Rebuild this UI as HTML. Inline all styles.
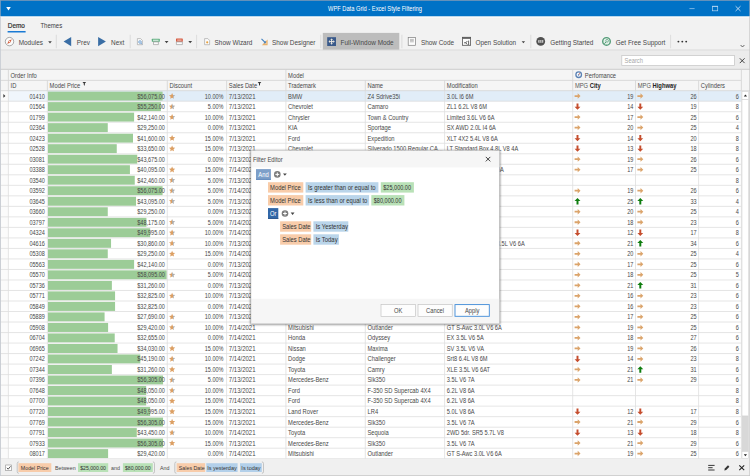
<!DOCTYPE html>
<html lang="en"><head><meta charset="utf-8"><title>WPF Data Grid - Excel Style Filtering</title>
<style>html,body{margin:0;padding:0;background:#f1f1f1;overflow:hidden}body{width:750px;height:476px;position:relative}svg{position:absolute;left:0;top:0;display:block}svg text{font-family:"Liberation Sans",sans-serif;white-space:pre}</style></head><body>
<svg width="750" height="476" viewBox="0 0 750 476">
<defs>
<filter id="sh" x="-10%" y="-10%" width="120%" height="125%"><feGaussianBlur stdDeviation="1.3"/></filter>
<clipPath id="cName"><rect x="365" y="88" width="78.5" height="372"/></clipPath>
<clipPath id="cMod"><rect x="445" y="88" width="126.5" height="372"/></clipPath>
<path id="star" d="M0.000,-1.000 L0.276,-0.380 L0.951,-0.309 L0.447,0.145 L0.588,0.809 L0.000,0.470 L-0.588,0.809 L-0.447,0.145 L-0.951,-0.309 L-0.276,-0.380Z"/>
<linearGradient id="g5" gradientUnits="userSpaceOnUse" x1="-0.95" x2="0.95" y1="0" y2="0"><stop offset="0.47" stop-color="#dc9f63"/><stop offset="0.47" stop-color="#adadad"/></linearGradient>
<linearGradient id="g10" gradientUnits="userSpaceOnUse" x1="-0.95" x2="0.95" y1="0" y2="0"><stop offset="0.57" stop-color="#dc9f63"/><stop offset="0.57" stop-color="#adadad"/></linearGradient>
<path id="arR" d="M-2.9,-0.9 H0.2 V-2.7 L3,0 L0.2,2.7 V0.9 H-2.9Z"/>
</defs>
<rect x="0.00" y="0.00" width="750.00" height="476.00" fill="#f2f2f2" />
<rect x="0.00" y="0.00" width="750.00" height="16.50" fill="#0072c6" />
<rect x="0.00" y="0.00" width="750.00" height="0.90" fill="#6f95b9" />
<rect x="0.00" y="0.00" width="0.80" height="16.50" fill="#7f9fbf" />
<rect x="749.20" y="0.00" width="0.80" height="16.50" fill="#7f9fbf" />
<rect x="0.00" y="16.50" width="750.00" height="1.20" fill="#fbfbfb" />
<text transform="translate(375.00,11.10) scale(0.842,1)" font-size="6.8" fill="#ffffff" text-anchor="middle" >WPF Data Grid - Excel Style Filtering</text>
<path d="M6.2,7.1 h4.6 l-2.3,3.3z" fill="#fff"/>
<line x1="689.40" y1="8.60" x2="694.60" y2="8.60" stroke="#a9cff0" stroke-width="0.7" />
<rect x="712.5" y="6.2" width="5.2" height="4.6" fill="none" stroke="#b4d5f2" stroke-width="0.7"/><path d="M712.2,6.5 h5.8" stroke="#b4d5f2" stroke-width="0.8"/>
<path d="M735.6,6.2 l4.9,4.8 M740.5,6.2 l-4.9,4.8" stroke="#e2eefa" stroke-width="0.8" fill="none"/>
<text transform="translate(7.80,27.70) scale(0.88,1)" font-size="7.3" fill="#2b2b2b" stroke="#2b2b2b" stroke-width="0.18">Demo</text>
<rect x="7.60" y="31.00" width="18.00" height="1.50" fill="#1a7ad4" />
<text transform="translate(40.40,27.70) scale(0.83,1)" font-size="7.3" fill="#3c3c3c" >Themes</text>
<circle cx="9.5" cy="41.6" r="4.2" fill="#fbfbfb" stroke="#7c7c7c" stroke-width="0.65"/>
<path d="M11.8,39.3 L8.7,40.8 L7.2,43.9 L10.3,42.4Z" fill="#d4603f"/><circle cx="9.5" cy="41.6" r="0.6" fill="#fff"/>
<text transform="translate(18.70,44.70) scale(0.88,1)" font-size="7.3" fill="#484848" >Modules</text>
<path d="M48.2,41.2 h3.6 l-1.8,2.2z" fill="#444"/>
<line x1="56.30" y1="34.80" x2="56.30" y2="48.20" stroke="#d6d6d6" stroke-width="0.8" />
<path d="M71.2,37 V46.2 L63.6,41.6Z" fill="#3a6ea5"/>
<text transform="translate(76.80,44.70) scale(0.88,1)" font-size="7.3" fill="#484848" >Prev</text>
<path d="M98.1,37 V46.2 L105.9,41.6Z" fill="#3a6ea5"/>
<text transform="translate(111.00,44.70) scale(0.88,1)" font-size="7.3" fill="#484848" >Next</text>
<line x1="130.20" y1="34.80" x2="130.20" y2="48.20" stroke="#d6d6d6" stroke-width="0.8" />
<path d="M137.4,38.6 h3.2 l1.8,1.8 v4.3 h-5z" fill="#fbfbfb" stroke="#9a9a9a" stroke-width="0.6"/>
<circle cx="140" cy="42" r="1.35" fill="#dbe9f6" stroke="#4a86c5" stroke-width="0.6"/><path d="M140.9,43 l1.2,1.3" stroke="#4a86c5" stroke-width="0.7"/>
<rect x="151.8" y="38.8" width="8" height="3" rx="0.5" fill="#5fae80"/><rect x="153" y="39.7" width="5.6" height="1.1" fill="#e3f2e9"/>
<path d="M153.5,41.9 h4.9 v2.7 h-4.9z" fill="#fcfcfc" stroke="#8f8f8f" stroke-width="0.6"/>
<path d="M164.7,41 h3.8 l-1.9,2.3z" fill="#444"/>
<rect x="176" y="38.5" width="6.8" height="3.3" rx="0.4" fill="#d65a41"/><rect x="177.2" y="39.6" width="4.4" height="1.0" fill="#f3cdc4"/>
<path d="M176.4,41.9 h6 v2.7 h-6z" fill="#fcfcfc" stroke="#8f8f8f" stroke-width="0.6"/>
<path d="M188.3,41 h3.8 l-1.9,2.3z" fill="#444"/>
<line x1="196.60" y1="34.80" x2="196.60" y2="48.20" stroke="#d6d6d6" stroke-width="0.8" />
<path d="M204.6,38.6 h3.2 l1.8,1.8 v4.3 h-5z" fill="#fbfbfb" stroke="#9a9a9a" stroke-width="0.6"/><circle cx="207.2" cy="42.3" r="1.1" fill="#e9a23f"/>
<text transform="translate(214.60,44.70) scale(0.88,1)" font-size="7.3" fill="#484848" >Show Wizard</text>
<path d="M267.6,39.4 v5.8 h-5.8z" fill="#eab26d"/><path d="M266.5,42.2 v1.9 h-1.9z" fill="#f6dcba"/>
<path d="M261.5,38.9 l3.3,3.3" stroke="#3f7fbf" stroke-width="1.1"/><path d="M265.8,40.8 v2.4 h-2.4z" fill="#3f7fbf"/>
<text transform="translate(272.00,44.70) scale(0.88,1)" font-size="7.3" fill="#484848" >Show Designer</text>
<line x1="320.80" y1="34.80" x2="320.80" y2="48.20" stroke="#d6d6d6" stroke-width="0.8" />
<rect x="322.80" y="32.90" width="76.50" height="17.30" fill="#bdbdbd" />
<rect x="327.2" y="37.2" width="8.8" height="8.8" fill="#39598a"/>
<path d="M331.6,38.6 l1.5,1.2 h-3z M331.6,44.6 l1.5,-1.2 h-3z M328.6,41.6 l1.2,-1.5 v3z M334.6,41.6 l-1.2,-1.5 v3z" fill="#ebe7df"/><path d="M331.6,39 v5.2 M329,41.6 h5.2" stroke="#ebe7df" stroke-width="1.0"/>
<text transform="translate(340.60,44.70) scale(0.88,1)" font-size="7.3" fill="#484848" >Full-Window Mode</text>
<line x1="401.90" y1="34.80" x2="401.90" y2="48.20" stroke="#d6d6d6" stroke-width="0.8" />
<rect x="408.2" y="37.4" width="7.3" height="7.9" fill="#fcfcfc" stroke="#7d7d7d" stroke-width="0.7"/><path d="M410,39.4 h3.8 M410,40.6 h3.8 M410,41.8 h3.8" stroke="#a2a2a2" stroke-width="0.7"/>
<text transform="translate(420.90,44.70) scale(0.88,1)" font-size="7.3" fill="#484848" >Show Code</text>
<rect x="462.5" y="37.3" width="8.1" height="8" fill="#fcfcfc" stroke="#555" stroke-width="0.8"/><rect x="462.5" y="37.3" width="8.1" height="1.5" fill="#555"/>
<path d="M464,42.8 h2 M467.3,41 l-1.4,1.8 1.4,1.8 M468.6,40.6 v4.4" stroke="#444" stroke-width="0.8" fill="none"/>
<text transform="translate(475.50,44.70) scale(0.88,1)" font-size="7.3" fill="#484848" >Open Solution</text>
<path d="M521.7,41.2 h3.4 l-1.7,2.1z" fill="#444"/>
<line x1="530.80" y1="34.80" x2="530.80" y2="48.20" stroke="#d6d6d6" stroke-width="0.8" />
<circle cx="540.7" cy="41.4" r="4.4" fill="#515151"/>
<rect x="538.1" y="40.1" width="5.2" height="2.6" rx="0.4" fill="#c9c9c9"/><path d="M539.8,40.1 v2.6 M541.6,40.1 v2.6" stroke="#515151" stroke-width="0.6"/>
<text transform="translate(550.30,44.70) scale(0.88,1)" font-size="7.3" fill="#484848" >Getting Started</text>
<circle cx="606.5" cy="41.4" r="3.8" fill="#e4f1e9" stroke="#559c79" stroke-width="1.4"/>
<circle cx="607.1" cy="40.8" r="1.3" fill="#fff" stroke="#559c79" stroke-width="0.8"/><path d="M605.9,42 l-1.5,1.8" stroke="#559c79" stroke-width="1"/>
<text transform="translate(615.80,44.70) scale(0.88,1)" font-size="7.3" fill="#484848" >Get Free Support</text>
<line x1="670.60" y1="34.80" x2="670.60" y2="48.20" stroke="#d6d6d6" stroke-width="0.8" />
<circle cx="678.4" cy="41.6" r="0.95" fill="#333"/>
<circle cx="682.3" cy="41.6" r="0.95" fill="#333"/>
<circle cx="686.2" cy="41.6" r="0.95" fill="#333"/>
<path d="M740.6,45 l1.9,2 1.9,-2" stroke="#444" stroke-width="0.8" fill="none"/>
<rect x="0.00" y="50.40" width="750.00" height="18.60" fill="#ececec" />
<rect x="0.00" y="49.50" width="750.00" height="1.00" fill="#dadada" />
<rect x="621.8" y="55.5" width="112.6" height="10.1" fill="#fff" stroke="#c4c4c4" stroke-width="0.7"/>
<text transform="translate(624.60,62.70) scale(0.855,1)" font-size="6.8" fill="#a6a6a6" >Search</text>
<path d="M739.8,58.3 l4.8,4.8 M744.6,58.3 l-4.8,4.8" stroke="#333" stroke-width="0.9" fill="none"/>
<rect x="0.00" y="69.00" width="750.00" height="389.73" fill="#fff" />
<rect x="0.00" y="69.00" width="750.00" height="21.70" fill="#f5f5f5" />
<rect x="8.40" y="90.70" width="733.00" height="10.52" fill="#e1edf8" />
<rect x="8.40" y="90.70" width="39.00" height="10.52" fill="#f0f6fc" />
<rect x="0.00" y="90.70" width="8.40" height="368.03" fill="#fbfbfb" />
<path d="M3.4,94.10 v3.6 l2,-1.8z" fill="#333"/>
<rect x="48.00" y="91.60" width="114.57" height="9.02" fill="#9ccc97" />
<rect x="48.00" y="102.12" width="112.89" height="9.02" fill="#9ccc97" />
<rect x="48.00" y="112.63" width="86.10" height="9.02" fill="#9ccc97" />
<rect x="48.00" y="123.15" width="59.76" height="9.02" fill="#9ccc97" />
<rect x="48.00" y="133.66" width="85.00" height="9.02" fill="#9ccc97" />
<rect x="48.00" y="144.18" width="68.75" height="9.02" fill="#9ccc97" />
<rect x="48.00" y="154.69" width="89.24" height="9.02" fill="#9ccc97" />
<rect x="48.00" y="165.21" width="81.92" height="9.02" fill="#9ccc97" />
<rect x="48.00" y="175.72" width="86.75" height="9.02" fill="#9ccc97" />
<rect x="48.00" y="186.24" width="114.57" height="9.02" fill="#9ccc97" />
<rect x="48.00" y="196.75" width="88.05" height="9.02" fill="#9ccc97" />
<rect x="48.00" y="207.27" width="59.76" height="9.02" fill="#9ccc97" />
<rect x="48.00" y="217.78" width="98.43" height="9.02" fill="#9ccc97" />
<rect x="48.00" y="228.29" width="102.15" height="9.02" fill="#9ccc97" />
<rect x="48.00" y="238.81" width="63.05" height="9.02" fill="#9ccc97" />
<rect x="48.00" y="249.33" width="59.76" height="9.02" fill="#9ccc97" />
<rect x="48.00" y="259.84" width="86.10" height="9.02" fill="#9ccc97" />
<rect x="48.00" y="270.35" width="118.70" height="9.02" fill="#9ccc97" />
<rect x="48.00" y="280.87" width="63.87" height="9.02" fill="#9ccc97" />
<rect x="48.00" y="291.38" width="67.07" height="9.02" fill="#9ccc97" />
<rect x="48.00" y="301.90" width="67.07" height="9.02" fill="#9ccc97" />
<rect x="48.00" y="312.41" width="56.58" height="9.02" fill="#9ccc97" />
<rect x="48.00" y="322.93" width="60.11" height="9.02" fill="#9ccc97" />
<rect x="48.00" y="333.44" width="66.72" height="9.02" fill="#9ccc97" />
<rect x="48.00" y="343.96" width="69.53" height="9.02" fill="#9ccc97" />
<rect x="48.00" y="354.47" width="92.33" height="9.02" fill="#9ccc97" />
<rect x="48.00" y="364.99" width="63.87" height="9.02" fill="#9ccc97" />
<rect x="48.00" y="375.50" width="115.04" height="9.02" fill="#9ccc97" />
<rect x="48.00" y="386.02" width="98.18" height="9.02" fill="#9ccc97" />
<rect x="48.00" y="396.53" width="98.18" height="9.02" fill="#9ccc97" />
<rect x="48.00" y="407.05" width="102.15" height="9.02" fill="#9ccc97" />
<rect x="48.00" y="417.56" width="115.04" height="9.02" fill="#9ccc97" />
<rect x="48.00" y="428.08" width="88.78" height="9.02" fill="#9ccc97" />
<rect x="48.00" y="438.59" width="115.04" height="9.02" fill="#9ccc97" />
<rect x="48.00" y="449.11" width="60.11" height="9.02" fill="#9ccc97" />
<line x1="0.00" y1="69.30" x2="750.00" y2="69.30" stroke="#cccccc" stroke-width="1" />
<line x1="0.00" y1="80.40" x2="741.40" y2="80.40" stroke="#d3d3d3" stroke-width="0.8" />
<line x1="0.00" y1="90.70" x2="750.00" y2="90.70" stroke="#d3d3d3" stroke-width="0.8" />
<line x1="0.00" y1="101.22" x2="741.40" y2="101.22" stroke="#dedede" stroke-width="0.8" />
<line x1="0.00" y1="111.73" x2="741.40" y2="111.73" stroke="#dedede" stroke-width="0.8" />
<line x1="0.00" y1="122.25" x2="741.40" y2="122.25" stroke="#dedede" stroke-width="0.8" />
<line x1="0.00" y1="132.76" x2="741.40" y2="132.76" stroke="#dedede" stroke-width="0.8" />
<line x1="0.00" y1="143.28" x2="741.40" y2="143.28" stroke="#dedede" stroke-width="0.8" />
<line x1="0.00" y1="153.79" x2="741.40" y2="153.79" stroke="#dedede" stroke-width="0.8" />
<line x1="0.00" y1="164.31" x2="741.40" y2="164.31" stroke="#dedede" stroke-width="0.8" />
<line x1="0.00" y1="174.82" x2="741.40" y2="174.82" stroke="#dedede" stroke-width="0.8" />
<line x1="0.00" y1="185.34" x2="741.40" y2="185.34" stroke="#dedede" stroke-width="0.8" />
<line x1="0.00" y1="195.85" x2="741.40" y2="195.85" stroke="#dedede" stroke-width="0.8" />
<line x1="0.00" y1="206.37" x2="741.40" y2="206.37" stroke="#dedede" stroke-width="0.8" />
<line x1="0.00" y1="216.88" x2="741.40" y2="216.88" stroke="#dedede" stroke-width="0.8" />
<line x1="0.00" y1="227.39" x2="741.40" y2="227.39" stroke="#dedede" stroke-width="0.8" />
<line x1="0.00" y1="237.91" x2="741.40" y2="237.91" stroke="#dedede" stroke-width="0.8" />
<line x1="0.00" y1="248.43" x2="741.40" y2="248.43" stroke="#dedede" stroke-width="0.8" />
<line x1="0.00" y1="258.94" x2="741.40" y2="258.94" stroke="#dedede" stroke-width="0.8" />
<line x1="0.00" y1="269.45" x2="741.40" y2="269.45" stroke="#dedede" stroke-width="0.8" />
<line x1="0.00" y1="279.97" x2="741.40" y2="279.97" stroke="#dedede" stroke-width="0.8" />
<line x1="0.00" y1="290.49" x2="741.40" y2="290.49" stroke="#dedede" stroke-width="0.8" />
<line x1="0.00" y1="301.00" x2="741.40" y2="301.00" stroke="#dedede" stroke-width="0.8" />
<line x1="0.00" y1="311.51" x2="741.40" y2="311.51" stroke="#dedede" stroke-width="0.8" />
<line x1="0.00" y1="322.03" x2="741.40" y2="322.03" stroke="#dedede" stroke-width="0.8" />
<line x1="0.00" y1="332.55" x2="741.40" y2="332.55" stroke="#dedede" stroke-width="0.8" />
<line x1="0.00" y1="343.06" x2="741.40" y2="343.06" stroke="#dedede" stroke-width="0.8" />
<line x1="0.00" y1="353.57" x2="741.40" y2="353.57" stroke="#dedede" stroke-width="0.8" />
<line x1="0.00" y1="364.09" x2="741.40" y2="364.09" stroke="#dedede" stroke-width="0.8" />
<line x1="0.00" y1="374.61" x2="741.40" y2="374.61" stroke="#dedede" stroke-width="0.8" />
<line x1="0.00" y1="385.12" x2="741.40" y2="385.12" stroke="#dedede" stroke-width="0.8" />
<line x1="0.00" y1="395.63" x2="741.40" y2="395.63" stroke="#dedede" stroke-width="0.8" />
<line x1="0.00" y1="406.15" x2="741.40" y2="406.15" stroke="#dedede" stroke-width="0.8" />
<line x1="0.00" y1="416.67" x2="741.40" y2="416.67" stroke="#dedede" stroke-width="0.8" />
<line x1="0.00" y1="427.18" x2="741.40" y2="427.18" stroke="#dedede" stroke-width="0.8" />
<line x1="0.00" y1="437.69" x2="741.40" y2="437.69" stroke="#dedede" stroke-width="0.8" />
<line x1="0.00" y1="448.21" x2="741.40" y2="448.21" stroke="#dedede" stroke-width="0.8" />
<line x1="0.00" y1="458.73" x2="741.40" y2="458.73" stroke="#dedede" stroke-width="0.8" />
<line x1="8.40" y1="69.00" x2="8.40" y2="80.40" stroke="#d3d3d3" stroke-width="0.8" />
<line x1="285.90" y1="69.00" x2="285.90" y2="80.40" stroke="#d3d3d3" stroke-width="0.8" />
<line x1="572.70" y1="69.00" x2="572.70" y2="80.40" stroke="#d3d3d3" stroke-width="0.8" />
<line x1="741.40" y1="69.00" x2="741.40" y2="80.40" stroke="#d3d3d3" stroke-width="0.8" />
<line x1="8.40" y1="80.40" x2="8.40" y2="90.70" stroke="#d3d3d3" stroke-width="0.8" />
<line x1="8.40" y1="90.70" x2="8.40" y2="458.73" stroke="#dedede" stroke-width="0.8" />
<line x1="47.40" y1="80.40" x2="47.40" y2="90.70" stroke="#d3d3d3" stroke-width="0.8" />
<line x1="47.40" y1="90.70" x2="47.40" y2="458.73" stroke="#dedede" stroke-width="0.8" />
<line x1="167.30" y1="80.40" x2="167.30" y2="90.70" stroke="#d3d3d3" stroke-width="0.8" />
<line x1="167.30" y1="90.70" x2="167.30" y2="458.73" stroke="#dedede" stroke-width="0.8" />
<line x1="226.60" y1="80.40" x2="226.60" y2="90.70" stroke="#d3d3d3" stroke-width="0.8" />
<line x1="226.60" y1="90.70" x2="226.60" y2="458.73" stroke="#dedede" stroke-width="0.8" />
<line x1="285.90" y1="80.40" x2="285.90" y2="90.70" stroke="#d3d3d3" stroke-width="0.8" />
<line x1="285.90" y1="90.70" x2="285.90" y2="458.73" stroke="#dedede" stroke-width="0.8" />
<line x1="365.30" y1="80.40" x2="365.30" y2="90.70" stroke="#d3d3d3" stroke-width="0.8" />
<line x1="365.30" y1="90.70" x2="365.30" y2="458.73" stroke="#dedede" stroke-width="0.8" />
<line x1="444.60" y1="80.40" x2="444.60" y2="90.70" stroke="#d3d3d3" stroke-width="0.8" />
<line x1="444.60" y1="90.70" x2="444.60" y2="458.73" stroke="#dedede" stroke-width="0.8" />
<line x1="572.70" y1="80.40" x2="572.70" y2="90.70" stroke="#d3d3d3" stroke-width="0.8" />
<line x1="572.70" y1="90.70" x2="572.70" y2="458.73" stroke="#dedede" stroke-width="0.8" />
<line x1="635.50" y1="80.40" x2="635.50" y2="90.70" stroke="#d3d3d3" stroke-width="0.8" />
<line x1="635.50" y1="90.70" x2="635.50" y2="458.73" stroke="#dedede" stroke-width="0.8" />
<line x1="698.60" y1="80.40" x2="698.60" y2="90.70" stroke="#d3d3d3" stroke-width="0.8" />
<line x1="698.60" y1="90.70" x2="698.60" y2="458.73" stroke="#dedede" stroke-width="0.8" />
<line x1="741.40" y1="80.40" x2="741.40" y2="90.70" stroke="#d3d3d3" stroke-width="0.8" />
<line x1="741.40" y1="90.70" x2="741.40" y2="458.73" stroke="#dedede" stroke-width="0.8" />
<line x1="0.40" y1="69.00" x2="0.40" y2="458.73" stroke="#d3d3d3" stroke-width="0.8" />
<text transform="translate(10.60,77.70) scale(0.855,1)" font-size="6.8" fill="#484848" >Order Info</text>
<text transform="translate(288.10,77.70) scale(0.855,1)" font-size="6.8" fill="#484848" >Model</text>
<circle cx="578.7" cy="74.7" r="2.8" fill="#f4f7fb" stroke="#5b82b4" stroke-width="1.3"/><path d="M578.5,75 l1.5,-1.9" stroke="#cf5a44" stroke-width="0.9"/><circle cx="578.5" cy="75" r="0.7" fill="#5b82b4"/>
<text transform="translate(584.80,77.70) scale(0.855,1)" font-size="6.8" fill="#484848" >Perfomance</text>
<text transform="translate(10.60,88.30) scale(0.855,1)" font-size="6.8" fill="#484848" >ID</text>
<text transform="translate(49.60,88.30) scale(0.855,1)" font-size="6.8" fill="#484848" >Model Price</text>
<text transform="translate(169.50,88.30) scale(0.855,1)" font-size="6.8" fill="#484848" >Discount</text>
<text transform="translate(228.80,88.30) scale(0.855,1)" font-size="6.8" fill="#484848" >Sales Date</text>
<text transform="translate(288.10,88.30) scale(0.855,1)" font-size="6.8" fill="#484848" >Trademark</text>
<text transform="translate(367.50,88.30) scale(0.855,1)" font-size="6.8" fill="#484848" >Name</text>
<text transform="translate(446.80,88.30) scale(0.855,1)" font-size="6.8" fill="#484848" >Modification</text>
<text transform="translate(700.80,88.30) scale(0.855,1)" font-size="6.8" fill="#484848" >Cylinders</text>
<text transform="translate(574.90,88.3) scale(0.855,1)" font-size="6.8" fill="#585858">MPG <tspan font-weight="bold" fill="#222">City</tspan></text>
<text transform="translate(637.70,88.3) scale(0.855,1)" font-size="6.8" fill="#585858">MPG <tspan font-weight="bold" fill="#222">Highway</tspan></text>
<path d="M82.50,82 h3.6 l-1.3,1.6 v2.1 l-1,-0.6 v-1.5z" fill="#333"/>
<path d="M257.70,82 h3.6 l-1.3,1.6 v2.1 l-1,-0.6 v-1.5z" fill="#333"/>
<text transform="translate(44.80,98.55) scale(0.815,1)" font-size="6.8" fill="#484848" text-anchor="end" >01410</text>
<text transform="translate(164.90,98.55) scale(0.815,1)" font-size="6.8" fill="#484848" text-anchor="end" >$56,075.00</text>
<use href="#star" transform="translate(172.10,96.16) scale(3.25)" fill="url(#g10)"/>
<text transform="translate(223.50,98.55) scale(0.815,1)" font-size="6.8" fill="#484848" text-anchor="end" >10.00%</text>
<text transform="translate(228.80,98.55) scale(0.885,1)" font-size="6.8" fill="#484848" >7/13/2021</text>
<text transform="translate(288.10,98.55) scale(0.855,1)" font-size="6.8" fill="#484848" >BMW</text>
<g clip-path="url(#cName)"><text transform="translate(367.50,98.55) scale(0.855,1)" font-size="6.8" fill="#484848" >Z4 Sdrive35i</text></g>
<g clip-path="url(#cMod)"><text transform="translate(446.80,98.55) scale(0.835,1)" font-size="6.8" fill="#484848" >3.0L I6 6M</text></g>
<use href="#arR" transform="translate(577.50,96.06) scale(1.0)" fill="#dba46b"/>
<text transform="translate(633.30,98.55) scale(0.815,1)" font-size="6.8" fill="#484848" text-anchor="end" >19</text>
<use href="#arR" transform="translate(640.30,96.06) scale(1.0)" fill="#dba46b"/>
<text transform="translate(696.70,98.55) scale(0.815,1)" font-size="6.8" fill="#484848" text-anchor="end" >26</text>
<text transform="translate(738.90,98.55) scale(0.815,1)" font-size="6.8" fill="#484848" text-anchor="end" >6</text>
<text transform="translate(44.80,109.06) scale(0.815,1)" font-size="6.8" fill="#484848" text-anchor="end" >01564</text>
<text transform="translate(164.90,109.06) scale(0.815,1)" font-size="6.8" fill="#484848" text-anchor="end" >$55,250.00</text>
<use href="#star" transform="translate(172.10,106.67) scale(3.25)" fill="url(#g5)"/>
<text transform="translate(223.50,109.06) scale(0.815,1)" font-size="6.8" fill="#484848" text-anchor="end" >5.00%</text>
<text transform="translate(228.80,109.06) scale(0.885,1)" font-size="6.8" fill="#484848" >7/13/2021</text>
<text transform="translate(288.10,109.06) scale(0.855,1)" font-size="6.8" fill="#484848" >Chevrolet</text>
<g clip-path="url(#cName)"><text transform="translate(367.50,109.06) scale(0.855,1)" font-size="6.8" fill="#484848" >Camaro</text></g>
<g clip-path="url(#cMod)"><text transform="translate(446.80,109.06) scale(0.835,1)" font-size="6.8" fill="#484848" >ZL1 6.2L V8 6M</text></g>
<use href="#arR" transform="translate(577.50,106.57) rotate(90) scale(1.08)" fill="#c54d2d"/>
<text transform="translate(633.30,109.06) scale(0.815,1)" font-size="6.8" fill="#484848" text-anchor="end" >14</text>
<use href="#arR" transform="translate(640.30,106.57) rotate(90) scale(1.08)" fill="#c54d2d"/>
<text transform="translate(696.70,109.06) scale(0.815,1)" font-size="6.8" fill="#484848" text-anchor="end" >19</text>
<text transform="translate(738.90,109.06) scale(0.815,1)" font-size="6.8" fill="#484848" text-anchor="end" >8</text>
<text transform="translate(44.80,119.58) scale(0.815,1)" font-size="6.8" fill="#484848" text-anchor="end" >01799</text>
<text transform="translate(164.90,119.58) scale(0.815,1)" font-size="6.8" fill="#484848" text-anchor="end" >$42,140.00</text>
<use href="#star" transform="translate(172.10,117.19) scale(3.25)" fill="url(#g10)"/>
<text transform="translate(223.50,119.58) scale(0.815,1)" font-size="6.8" fill="#484848" text-anchor="end" >10.00%</text>
<text transform="translate(228.80,119.58) scale(0.885,1)" font-size="6.8" fill="#484848" >7/13/2021</text>
<text transform="translate(288.10,119.58) scale(0.855,1)" font-size="6.8" fill="#484848" >Chrysler</text>
<g clip-path="url(#cName)"><text transform="translate(367.50,119.58) scale(0.855,1)" font-size="6.8" fill="#484848" >Town &amp; Country</text></g>
<g clip-path="url(#cMod)"><text transform="translate(446.80,119.58) scale(0.835,1)" font-size="6.8" fill="#484848" >Limited 3.6L V6 6A</text></g>
<use href="#arR" transform="translate(577.50,117.09) scale(1.0)" fill="#dba46b"/>
<text transform="translate(633.30,119.58) scale(0.815,1)" font-size="6.8" fill="#484848" text-anchor="end" >17</text>
<use href="#arR" transform="translate(640.30,117.09) scale(1.0)" fill="#dba46b"/>
<text transform="translate(696.70,119.58) scale(0.815,1)" font-size="6.8" fill="#484848" text-anchor="end" >25</text>
<text transform="translate(738.90,119.58) scale(0.815,1)" font-size="6.8" fill="#484848" text-anchor="end" >6</text>
<text transform="translate(44.80,130.09) scale(0.815,1)" font-size="6.8" fill="#484848" text-anchor="end" >02364</text>
<text transform="translate(164.90,130.09) scale(0.815,1)" font-size="6.8" fill="#484848" text-anchor="end" >$29,250.00</text>
<text transform="translate(223.50,130.09) scale(0.815,1)" font-size="6.8" fill="#484848" text-anchor="end" >0.00%</text>
<text transform="translate(228.80,130.09) scale(0.885,1)" font-size="6.8" fill="#484848" >7/13/2021</text>
<text transform="translate(288.10,130.09) scale(0.855,1)" font-size="6.8" fill="#484848" >KIA</text>
<g clip-path="url(#cName)"><text transform="translate(367.50,130.09) scale(0.855,1)" font-size="6.8" fill="#484848" >Sportage</text></g>
<g clip-path="url(#cMod)"><text transform="translate(446.80,130.09) scale(0.835,1)" font-size="6.8" fill="#484848" >SX AWD 2.0L I4 6A</text></g>
<use href="#arR" transform="translate(577.50,127.60) scale(1.0)" fill="#dba46b"/>
<text transform="translate(633.30,130.09) scale(0.815,1)" font-size="6.8" fill="#484848" text-anchor="end" >20</text>
<use href="#arR" transform="translate(640.30,127.60) scale(1.0)" fill="#dba46b"/>
<text transform="translate(696.70,130.09) scale(0.815,1)" font-size="6.8" fill="#484848" text-anchor="end" >25</text>
<text transform="translate(738.90,130.09) scale(0.815,1)" font-size="6.8" fill="#484848" text-anchor="end" >4</text>
<text transform="translate(44.80,140.61) scale(0.815,1)" font-size="6.8" fill="#484848" text-anchor="end" >02423</text>
<text transform="translate(164.90,140.61) scale(0.815,1)" font-size="6.8" fill="#484848" text-anchor="end" >$41,600.00</text>
<use href="#star" transform="translate(172.10,138.22) scale(3.25)" fill="#dc9f63"/>
<text transform="translate(223.50,140.61) scale(0.815,1)" font-size="6.8" fill="#484848" text-anchor="end" >15.00%</text>
<text transform="translate(228.80,140.61) scale(0.885,1)" font-size="6.8" fill="#484848" >7/13/2021</text>
<text transform="translate(288.10,140.61) scale(0.855,1)" font-size="6.8" fill="#484848" >Ford</text>
<g clip-path="url(#cName)"><text transform="translate(367.50,140.61) scale(0.855,1)" font-size="6.8" fill="#484848" >Expedition</text></g>
<g clip-path="url(#cMod)"><text transform="translate(446.80,140.61) scale(0.835,1)" font-size="6.8" fill="#484848" >XLT 4X2 5.4L V8 6A</text></g>
<use href="#arR" transform="translate(577.50,138.12) rotate(90) scale(1.08)" fill="#c54d2d"/>
<text transform="translate(633.30,140.61) scale(0.815,1)" font-size="6.8" fill="#484848" text-anchor="end" >14</text>
<use href="#arR" transform="translate(640.30,138.12) rotate(90) scale(1.08)" fill="#c54d2d"/>
<text transform="translate(696.70,140.61) scale(0.815,1)" font-size="6.8" fill="#484848" text-anchor="end" >20</text>
<text transform="translate(738.90,140.61) scale(0.815,1)" font-size="6.8" fill="#484848" text-anchor="end" >8</text>
<text transform="translate(44.80,151.12) scale(0.815,1)" font-size="6.8" fill="#484848" text-anchor="end" >02528</text>
<text transform="translate(164.90,151.12) scale(0.815,1)" font-size="6.8" fill="#484848" text-anchor="end" >$33,650.00</text>
<use href="#star" transform="translate(172.10,148.73) scale(3.25)" fill="#dc9f63"/>
<text transform="translate(223.50,151.12) scale(0.815,1)" font-size="6.8" fill="#484848" text-anchor="end" >15.00%</text>
<text transform="translate(228.80,151.12) scale(0.885,1)" font-size="6.8" fill="#484848" >7/13/2021</text>
<text transform="translate(288.10,151.12) scale(0.855,1)" font-size="6.8" fill="#484848" >Chevrolet</text>
<g clip-path="url(#cName)"><text transform="translate(367.50,151.12) scale(0.855,1)" font-size="6.8" fill="#484848" >Silverado 1500 Regular CA...</text></g>
<g clip-path="url(#cMod)"><text transform="translate(446.80,151.12) scale(0.835,1)" font-size="6.8" fill="#484848" >LT Standard Box 4.8L V8 4A</text></g>
<use href="#arR" transform="translate(577.50,148.63) rotate(90) scale(1.08)" fill="#c54d2d"/>
<text transform="translate(633.30,151.12) scale(0.815,1)" font-size="6.8" fill="#484848" text-anchor="end" >13</text>
<use href="#arR" transform="translate(640.30,148.63) rotate(90) scale(1.08)" fill="#c54d2d"/>
<text transform="translate(696.70,151.12) scale(0.815,1)" font-size="6.8" fill="#484848" text-anchor="end" >18</text>
<text transform="translate(738.90,151.12) scale(0.815,1)" font-size="6.8" fill="#484848" text-anchor="end" >8</text>
<text transform="translate(44.80,161.64) scale(0.815,1)" font-size="6.8" fill="#484848" text-anchor="end" >03081</text>
<text transform="translate(164.90,161.64) scale(0.815,1)" font-size="6.8" fill="#484848" text-anchor="end" >$43,675.00</text>
<text transform="translate(223.50,161.64) scale(0.815,1)" font-size="6.8" fill="#484848" text-anchor="end" >0.00%</text>
<text transform="translate(228.80,161.64) scale(0.885,1)" font-size="6.8" fill="#484848" >7/13/2021</text>
<text transform="translate(288.10,161.64) scale(0.855,1)" font-size="6.8" fill="#484848" >BMW</text>
<g clip-path="url(#cName)"><text transform="translate(367.50,161.64) scale(0.855,1)" font-size="6.8" fill="#484848" >Z4 Sdrive35i</text></g>
<g clip-path="url(#cMod)"><text transform="translate(446.80,161.64) scale(0.835,1)" font-size="6.8" fill="#484848" >3.0L I6 6M</text></g>
<use href="#arR" transform="translate(577.50,159.15) scale(1.0)" fill="#dba46b"/>
<text transform="translate(633.30,161.64) scale(0.815,1)" font-size="6.8" fill="#484848" text-anchor="end" >19</text>
<use href="#arR" transform="translate(640.30,159.15) scale(1.0)" fill="#dba46b"/>
<text transform="translate(696.70,161.64) scale(0.815,1)" font-size="6.8" fill="#484848" text-anchor="end" >26</text>
<text transform="translate(738.90,161.64) scale(0.815,1)" font-size="6.8" fill="#484848" text-anchor="end" >6</text>
<text transform="translate(44.80,172.16) scale(0.815,1)" font-size="6.8" fill="#484848" text-anchor="end" >03388</text>
<text transform="translate(164.90,172.16) scale(0.815,1)" font-size="6.8" fill="#484848" text-anchor="end" >$40,095.00</text>
<use href="#star" transform="translate(172.10,169.76) scale(3.25)" fill="#dc9f63"/>
<text transform="translate(223.50,172.16) scale(0.815,1)" font-size="6.8" fill="#484848" text-anchor="end" >15.00%</text>
<text transform="translate(228.80,172.16) scale(0.885,1)" font-size="6.8" fill="#484848" >7/14/2021</text>
<text transform="translate(288.10,172.16) scale(0.855,1)" font-size="6.8" fill="#484848" >Chrysler</text>
<g clip-path="url(#cName)"><text transform="translate(367.50,172.16) scale(0.855,1)" font-size="6.8" fill="#484848" >Town &amp; Country</text></g>
<g clip-path="url(#cMod)"><text transform="translate(503.90,172.16) scale(0.835,1)" font-size="6.8" fill="#484848" text-anchor="end" >Touring-L 3.6L V6 6A</text></g>
<use href="#arR" transform="translate(577.50,169.66) scale(1.0)" fill="#dba46b"/>
<text transform="translate(633.30,172.16) scale(0.815,1)" font-size="6.8" fill="#484848" text-anchor="end" >17</text>
<use href="#arR" transform="translate(640.30,169.66) scale(1.0)" fill="#dba46b"/>
<text transform="translate(696.70,172.16) scale(0.815,1)" font-size="6.8" fill="#484848" text-anchor="end" >25</text>
<text transform="translate(738.90,172.16) scale(0.815,1)" font-size="6.8" fill="#484848" text-anchor="end" >6</text>
<text transform="translate(44.80,182.67) scale(0.815,1)" font-size="6.8" fill="#484848" text-anchor="end" >03540</text>
<text transform="translate(164.90,182.67) scale(0.815,1)" font-size="6.8" fill="#484848" text-anchor="end" >$42,460.00</text>
<use href="#star" transform="translate(172.10,180.28) scale(3.25)" fill="url(#g5)"/>
<text transform="translate(223.50,182.67) scale(0.815,1)" font-size="6.8" fill="#484848" text-anchor="end" >5.00%</text>
<text transform="translate(228.80,182.67) scale(0.885,1)" font-size="6.8" fill="#484848" >7/13/2021</text>
<text transform="translate(288.10,182.67) scale(0.855,1)" font-size="6.8" fill="#484848" >Ford</text>
<g clip-path="url(#cName)"><text transform="translate(367.50,182.67) scale(0.855,1)" font-size="6.8" fill="#484848" >F-350 SD Supercab 4X4</text></g>
<g clip-path="url(#cMod)"><text transform="translate(446.80,182.67) scale(0.835,1)" font-size="6.8" fill="#484848" >6.2L V8 6A</text></g>
<text transform="translate(738.90,182.67) scale(0.815,1)" font-size="6.8" fill="#484848" text-anchor="end" >8</text>
<text transform="translate(44.80,193.19) scale(0.815,1)" font-size="6.8" fill="#484848" text-anchor="end" >03592</text>
<text transform="translate(164.90,193.19) scale(0.815,1)" font-size="6.8" fill="#484848" text-anchor="end" >$56,075.00</text>
<use href="#star" transform="translate(172.10,190.79) scale(3.25)" fill="url(#g5)"/>
<text transform="translate(223.50,193.19) scale(0.815,1)" font-size="6.8" fill="#484848" text-anchor="end" >5.00%</text>
<text transform="translate(228.80,193.19) scale(0.885,1)" font-size="6.8" fill="#484848" >7/14/2021</text>
<text transform="translate(288.10,193.19) scale(0.855,1)" font-size="6.8" fill="#484848" >BMW</text>
<g clip-path="url(#cName)"><text transform="translate(367.50,193.19) scale(0.855,1)" font-size="6.8" fill="#484848" >Z4 Sdrive35i</text></g>
<g clip-path="url(#cMod)"><text transform="translate(446.80,193.19) scale(0.835,1)" font-size="6.8" fill="#484848" >3.0L I6 6M</text></g>
<use href="#arR" transform="translate(577.50,190.69) scale(1.0)" fill="#dba46b"/>
<text transform="translate(633.30,193.19) scale(0.815,1)" font-size="6.8" fill="#484848" text-anchor="end" >19</text>
<use href="#arR" transform="translate(640.30,190.69) scale(1.0)" fill="#dba46b"/>
<text transform="translate(696.70,193.19) scale(0.815,1)" font-size="6.8" fill="#484848" text-anchor="end" >26</text>
<text transform="translate(738.90,193.19) scale(0.815,1)" font-size="6.8" fill="#484848" text-anchor="end" >6</text>
<text transform="translate(44.80,203.70) scale(0.815,1)" font-size="6.8" fill="#484848" text-anchor="end" >03645</text>
<text transform="translate(164.90,203.70) scale(0.815,1)" font-size="6.8" fill="#484848" text-anchor="end" >$43,095.00</text>
<use href="#star" transform="translate(172.10,201.31) scale(3.25)" fill="url(#g5)"/>
<text transform="translate(223.50,203.70) scale(0.815,1)" font-size="6.8" fill="#484848" text-anchor="end" >5.00%</text>
<text transform="translate(228.80,203.70) scale(0.885,1)" font-size="6.8" fill="#484848" >7/13/2021</text>
<text transform="translate(288.10,203.70) scale(0.855,1)" font-size="6.8" fill="#484848" >Toyota</text>
<g clip-path="url(#cName)"><text transform="translate(367.50,203.70) scale(0.855,1)" font-size="6.8" fill="#484848" >Camry</text></g>
<g clip-path="url(#cMod)"><text transform="translate(446.80,203.70) scale(0.835,1)" font-size="6.8" fill="#484848" >LE 2.5L I4 6AT</text></g>
<use href="#arR" transform="translate(577.50,201.21) rotate(-90) scale(1.1)" fill="#0f7d0f"/>
<text transform="translate(633.30,203.70) scale(0.815,1)" font-size="6.8" fill="#484848" text-anchor="end" >25</text>
<use href="#arR" transform="translate(640.30,201.21) rotate(-90) scale(1.1)" fill="#0f7d0f"/>
<text transform="translate(696.70,203.70) scale(0.815,1)" font-size="6.8" fill="#484848" text-anchor="end" >33</text>
<text transform="translate(738.90,203.70) scale(0.815,1)" font-size="6.8" fill="#484848" text-anchor="end" >4</text>
<text transform="translate(44.80,214.22) scale(0.815,1)" font-size="6.8" fill="#484848" text-anchor="end" >03660</text>
<text transform="translate(164.90,214.22) scale(0.815,1)" font-size="6.8" fill="#484848" text-anchor="end" >$29,250.00</text>
<text transform="translate(223.50,214.22) scale(0.815,1)" font-size="6.8" fill="#484848" text-anchor="end" >0.00%</text>
<text transform="translate(228.80,214.22) scale(0.885,1)" font-size="6.8" fill="#484848" >7/13/2021</text>
<text transform="translate(288.10,214.22) scale(0.855,1)" font-size="6.8" fill="#484848" >KIA</text>
<g clip-path="url(#cName)"><text transform="translate(367.50,214.22) scale(0.855,1)" font-size="6.8" fill="#484848" >Sportage</text></g>
<g clip-path="url(#cMod)"><text transform="translate(446.80,214.22) scale(0.835,1)" font-size="6.8" fill="#484848" >SX AWD 2.0L I4 6A</text></g>
<use href="#arR" transform="translate(577.50,211.72) scale(1.0)" fill="#dba46b"/>
<text transform="translate(633.30,214.22) scale(0.815,1)" font-size="6.8" fill="#484848" text-anchor="end" >20</text>
<use href="#arR" transform="translate(640.30,211.72) scale(1.0)" fill="#dba46b"/>
<text transform="translate(696.70,214.22) scale(0.815,1)" font-size="6.8" fill="#484848" text-anchor="end" >25</text>
<text transform="translate(738.90,214.22) scale(0.815,1)" font-size="6.8" fill="#484848" text-anchor="end" >4</text>
<text transform="translate(44.80,224.73) scale(0.815,1)" font-size="6.8" fill="#484848" text-anchor="end" >03797</text>
<text transform="translate(164.90,224.73) scale(0.815,1)" font-size="6.8" fill="#484848" text-anchor="end" >$48,175.00</text>
<use href="#star" transform="translate(172.10,222.34) scale(3.25)" fill="url(#g5)"/>
<text transform="translate(223.50,224.73) scale(0.815,1)" font-size="6.8" fill="#484848" text-anchor="end" >5.00%</text>
<text transform="translate(228.80,224.73) scale(0.885,1)" font-size="6.8" fill="#484848" >7/14/2021</text>
<text transform="translate(288.10,224.73) scale(0.855,1)" font-size="6.8" fill="#484848" >Audi</text>
<g clip-path="url(#cName)"><text transform="translate(367.50,224.73) scale(0.855,1)" font-size="6.8" fill="#484848" >S4</text></g>
<g clip-path="url(#cMod)"><text transform="translate(446.80,224.73) scale(0.835,1)" font-size="6.8" fill="#484848" >3.0L V6 6M</text></g>
<use href="#arR" transform="translate(577.50,222.24) scale(1.0)" fill="#dba46b"/>
<text transform="translate(633.30,224.73) scale(0.815,1)" font-size="6.8" fill="#484848" text-anchor="end" >18</text>
<use href="#arR" transform="translate(640.30,222.24) scale(1.0)" fill="#dba46b"/>
<text transform="translate(696.70,224.73) scale(0.815,1)" font-size="6.8" fill="#484848" text-anchor="end" >23</text>
<text transform="translate(738.90,224.73) scale(0.815,1)" font-size="6.8" fill="#484848" text-anchor="end" >6</text>
<text transform="translate(44.80,235.24) scale(0.815,1)" font-size="6.8" fill="#484848" text-anchor="end" >04324</text>
<text transform="translate(164.90,235.24) scale(0.815,1)" font-size="6.8" fill="#484848" text-anchor="end" >$49,995.00</text>
<use href="#star" transform="translate(172.10,232.85) scale(3.25)" fill="url(#g10)"/>
<text transform="translate(223.50,235.24) scale(0.815,1)" font-size="6.8" fill="#484848" text-anchor="end" >10.00%</text>
<text transform="translate(228.80,235.24) scale(0.885,1)" font-size="6.8" fill="#484848" >7/14/2021</text>
<text transform="translate(288.10,235.24) scale(0.855,1)" font-size="6.8" fill="#484848" >Land Rover</text>
<g clip-path="url(#cName)"><text transform="translate(367.50,235.24) scale(0.855,1)" font-size="6.8" fill="#484848" >LR4</text></g>
<g clip-path="url(#cMod)"><text transform="translate(446.80,235.24) scale(0.835,1)" font-size="6.8" fill="#484848" >5.0L V8 6A</text></g>
<use href="#arR" transform="translate(577.50,232.75) rotate(90) scale(1.08)" fill="#c54d2d"/>
<text transform="translate(633.30,235.24) scale(0.815,1)" font-size="6.8" fill="#484848" text-anchor="end" >12</text>
<use href="#arR" transform="translate(640.30,232.75) rotate(90) scale(1.08)" fill="#c54d2d"/>
<text transform="translate(696.70,235.24) scale(0.815,1)" font-size="6.8" fill="#484848" text-anchor="end" >17</text>
<text transform="translate(738.90,235.24) scale(0.815,1)" font-size="6.8" fill="#484848" text-anchor="end" >8</text>
<text transform="translate(44.80,245.76) scale(0.815,1)" font-size="6.8" fill="#484848" text-anchor="end" >04616</text>
<text transform="translate(164.90,245.76) scale(0.815,1)" font-size="6.8" fill="#484848" text-anchor="end" >$30,860.00</text>
<use href="#star" transform="translate(172.10,243.37) scale(3.25)" fill="url(#g10)"/>
<text transform="translate(223.50,245.76) scale(0.815,1)" font-size="6.8" fill="#484848" text-anchor="end" >10.00%</text>
<text transform="translate(228.80,245.76) scale(0.885,1)" font-size="6.8" fill="#484848" >7/13/2021</text>
<text transform="translate(288.10,245.76) scale(0.855,1)" font-size="6.8" fill="#484848" >Honda</text>
<g clip-path="url(#cName)"><text transform="translate(367.50,245.76) scale(0.855,1)" font-size="6.8" fill="#484848" >Accord</text></g>
<g clip-path="url(#cMod)"><text transform="translate(524.70,245.76) scale(0.835,1)" font-size="6.8" fill="#484848" text-anchor="end" >EX-L V-6 6-Spd AT 3.5L V6 6A</text></g>
<use href="#arR" transform="translate(577.50,243.27) scale(1.0)" fill="#dba46b"/>
<text transform="translate(633.30,245.76) scale(0.815,1)" font-size="6.8" fill="#484848" text-anchor="end" >21</text>
<use href="#arR" transform="translate(640.30,243.27) rotate(-90) scale(1.1)" fill="#0f7d0f"/>
<text transform="translate(696.70,245.76) scale(0.815,1)" font-size="6.8" fill="#484848" text-anchor="end" >34</text>
<text transform="translate(738.90,245.76) scale(0.815,1)" font-size="6.8" fill="#484848" text-anchor="end" >6</text>
<text transform="translate(44.80,256.28) scale(0.815,1)" font-size="6.8" fill="#484848" text-anchor="end" >05308</text>
<text transform="translate(164.90,256.28) scale(0.815,1)" font-size="6.8" fill="#484848" text-anchor="end" >$29,250.00</text>
<use href="#star" transform="translate(172.10,253.88) scale(3.25)" fill="#dc9f63"/>
<text transform="translate(223.50,256.28) scale(0.815,1)" font-size="6.8" fill="#484848" text-anchor="end" >15.00%</text>
<text transform="translate(228.80,256.28) scale(0.885,1)" font-size="6.8" fill="#484848" >7/14/2021</text>
<text transform="translate(288.10,256.28) scale(0.855,1)" font-size="6.8" fill="#484848" >KIA</text>
<g clip-path="url(#cName)"><text transform="translate(367.50,256.28) scale(0.855,1)" font-size="6.8" fill="#484848" >Sportage</text></g>
<g clip-path="url(#cMod)"><text transform="translate(446.80,256.28) scale(0.835,1)" font-size="6.8" fill="#484848" >SX AWD 2.0L I4 6A</text></g>
<use href="#arR" transform="translate(577.50,253.78) scale(1.0)" fill="#dba46b"/>
<text transform="translate(633.30,256.28) scale(0.815,1)" font-size="6.8" fill="#484848" text-anchor="end" >20</text>
<use href="#arR" transform="translate(640.30,253.78) scale(1.0)" fill="#dba46b"/>
<text transform="translate(696.70,256.28) scale(0.815,1)" font-size="6.8" fill="#484848" text-anchor="end" >25</text>
<text transform="translate(738.90,256.28) scale(0.815,1)" font-size="6.8" fill="#484848" text-anchor="end" >4</text>
<text transform="translate(44.80,266.79) scale(0.815,1)" font-size="6.8" fill="#484848" text-anchor="end" >05563</text>
<text transform="translate(164.90,266.79) scale(0.815,1)" font-size="6.8" fill="#484848" text-anchor="end" >$42,140.00</text>
<text transform="translate(223.50,266.79) scale(0.815,1)" font-size="6.8" fill="#484848" text-anchor="end" >0.00%</text>
<text transform="translate(228.80,266.79) scale(0.885,1)" font-size="6.8" fill="#484848" >7/13/2021</text>
<text transform="translate(288.10,266.79) scale(0.855,1)" font-size="6.8" fill="#484848" >Chrysler</text>
<g clip-path="url(#cName)"><text transform="translate(367.50,266.79) scale(0.855,1)" font-size="6.8" fill="#484848" >Town &amp; Country</text></g>
<g clip-path="url(#cMod)"><text transform="translate(446.80,266.79) scale(0.835,1)" font-size="6.8" fill="#484848" >Limited 3.6L V6 6A</text></g>
<use href="#arR" transform="translate(577.50,264.30) scale(1.0)" fill="#dba46b"/>
<text transform="translate(633.30,266.79) scale(0.815,1)" font-size="6.8" fill="#484848" text-anchor="end" >17</text>
<use href="#arR" transform="translate(640.30,264.30) scale(1.0)" fill="#dba46b"/>
<text transform="translate(696.70,266.79) scale(0.815,1)" font-size="6.8" fill="#484848" text-anchor="end" >25</text>
<text transform="translate(738.90,266.79) scale(0.815,1)" font-size="6.8" fill="#484848" text-anchor="end" >6</text>
<text transform="translate(44.80,277.31) scale(0.815,1)" font-size="6.8" fill="#484848" text-anchor="end" >05570</text>
<text transform="translate(164.90,277.31) scale(0.815,1)" font-size="6.8" fill="#484848" text-anchor="end" >$58,095.00</text>
<use href="#star" transform="translate(172.10,274.91) scale(3.25)" fill="url(#g5)"/>
<text transform="translate(223.50,277.31) scale(0.815,1)" font-size="6.8" fill="#484848" text-anchor="end" >5.00%</text>
<text transform="translate(228.80,277.31) scale(0.885,1)" font-size="6.8" fill="#484848" >7/14/2021</text>
<text transform="translate(288.10,277.31) scale(0.855,1)" font-size="6.8" fill="#484848" >Audi</text>
<g clip-path="url(#cName)"><text transform="translate(367.50,277.31) scale(0.855,1)" font-size="6.8" fill="#484848" >S5</text></g>
<g clip-path="url(#cMod)"><text transform="translate(446.80,277.31) scale(0.835,1)" font-size="6.8" fill="#484848" >3.0L V6 7A</text></g>
<use href="#arR" transform="translate(577.50,274.81) scale(1.0)" fill="#dba46b"/>
<text transform="translate(633.30,277.31) scale(0.815,1)" font-size="6.8" fill="#484848" text-anchor="end" >18</text>
<use href="#arR" transform="translate(640.30,274.81) scale(1.0)" fill="#dba46b"/>
<text transform="translate(696.70,277.31) scale(0.815,1)" font-size="6.8" fill="#484848" text-anchor="end" >25</text>
<text transform="translate(738.90,277.31) scale(0.815,1)" font-size="6.8" fill="#484848" text-anchor="end" >5</text>
<text transform="translate(44.80,287.82) scale(0.815,1)" font-size="6.8" fill="#484848" text-anchor="end" >05736</text>
<text transform="translate(164.90,287.82) scale(0.815,1)" font-size="6.8" fill="#484848" text-anchor="end" >$31,260.00</text>
<text transform="translate(223.50,287.82) scale(0.815,1)" font-size="6.8" fill="#484848" text-anchor="end" >0.00%</text>
<text transform="translate(228.80,287.82) scale(0.885,1)" font-size="6.8" fill="#484848" >7/13/2021</text>
<text transform="translate(288.10,287.82) scale(0.855,1)" font-size="6.8" fill="#484848" >Toyota</text>
<g clip-path="url(#cName)"><text transform="translate(367.50,287.82) scale(0.855,1)" font-size="6.8" fill="#484848" >Camry</text></g>
<g clip-path="url(#cMod)"><text transform="translate(446.80,287.82) scale(0.835,1)" font-size="6.8" fill="#484848" >XLE 3.5L V6 6AT</text></g>
<use href="#arR" transform="translate(577.50,285.33) scale(1.0)" fill="#dba46b"/>
<text transform="translate(633.30,287.82) scale(0.815,1)" font-size="6.8" fill="#484848" text-anchor="end" >21</text>
<use href="#arR" transform="translate(640.30,285.33) rotate(-90) scale(1.1)" fill="#0f7d0f"/>
<text transform="translate(696.70,287.82) scale(0.815,1)" font-size="6.8" fill="#484848" text-anchor="end" >31</text>
<text transform="translate(738.90,287.82) scale(0.815,1)" font-size="6.8" fill="#484848" text-anchor="end" >6</text>
<text transform="translate(44.80,298.34) scale(0.815,1)" font-size="6.8" fill="#484848" text-anchor="end" >05771</text>
<text transform="translate(164.90,298.34) scale(0.815,1)" font-size="6.8" fill="#484848" text-anchor="end" >$32,825.00</text>
<use href="#star" transform="translate(172.10,295.94) scale(3.25)" fill="url(#g10)"/>
<text transform="translate(223.50,298.34) scale(0.815,1)" font-size="6.8" fill="#484848" text-anchor="end" >10.00%</text>
<text transform="translate(228.80,298.34) scale(0.885,1)" font-size="6.8" fill="#484848" >7/13/2021</text>
<text transform="translate(288.10,298.34) scale(0.855,1)" font-size="6.8" fill="#484848" >Nissan</text>
<g clip-path="url(#cName)"><text transform="translate(367.50,298.34) scale(0.855,1)" font-size="6.8" fill="#484848" >Frontier</text></g>
<g clip-path="url(#cMod)"><text transform="translate(446.80,298.34) scale(0.835,1)" font-size="6.8" fill="#484848" >PRO-4X 4.0L V6 5A</text></g>
<use href="#arR" transform="translate(577.50,295.84) scale(1.0)" fill="#dba46b"/>
<text transform="translate(633.30,298.34) scale(0.815,1)" font-size="6.8" fill="#484848" text-anchor="end" >16</text>
<use href="#arR" transform="translate(640.30,295.84) scale(1.0)" fill="#dba46b"/>
<text transform="translate(696.70,298.34) scale(0.815,1)" font-size="6.8" fill="#484848" text-anchor="end" >23</text>
<text transform="translate(738.90,298.34) scale(0.815,1)" font-size="6.8" fill="#484848" text-anchor="end" >6</text>
<text transform="translate(44.80,308.85) scale(0.815,1)" font-size="6.8" fill="#484848" text-anchor="end" >05849</text>
<text transform="translate(164.90,308.85) scale(0.815,1)" font-size="6.8" fill="#484848" text-anchor="end" >$32,825.00</text>
<text transform="translate(223.50,308.85) scale(0.815,1)" font-size="6.8" fill="#484848" text-anchor="end" >0.00%</text>
<text transform="translate(228.80,308.85) scale(0.885,1)" font-size="6.8" fill="#484848" >7/14/2021</text>
<text transform="translate(288.10,308.85) scale(0.855,1)" font-size="6.8" fill="#484848" >Nissan</text>
<g clip-path="url(#cName)"><text transform="translate(367.50,308.85) scale(0.855,1)" font-size="6.8" fill="#484848" >Frontier</text></g>
<g clip-path="url(#cMod)"><text transform="translate(446.80,308.85) scale(0.835,1)" font-size="6.8" fill="#484848" >PRO-4X 4.0L V6 5A</text></g>
<use href="#arR" transform="translate(577.50,306.36) scale(1.0)" fill="#dba46b"/>
<text transform="translate(633.30,308.85) scale(0.815,1)" font-size="6.8" fill="#484848" text-anchor="end" >16</text>
<use href="#arR" transform="translate(640.30,306.36) scale(1.0)" fill="#dba46b"/>
<text transform="translate(696.70,308.85) scale(0.815,1)" font-size="6.8" fill="#484848" text-anchor="end" >23</text>
<text transform="translate(738.90,308.85) scale(0.815,1)" font-size="6.8" fill="#484848" text-anchor="end" >6</text>
<text transform="translate(44.80,319.37) scale(0.815,1)" font-size="6.8" fill="#484848" text-anchor="end" >05889</text>
<text transform="translate(164.90,319.37) scale(0.815,1)" font-size="6.8" fill="#484848" text-anchor="end" >$27,690.00</text>
<use href="#star" transform="translate(172.10,316.97) scale(3.25)" fill="url(#g10)"/>
<text transform="translate(223.50,319.37) scale(0.815,1)" font-size="6.8" fill="#484848" text-anchor="end" >10.00%</text>
<text transform="translate(228.80,319.37) scale(0.885,1)" font-size="6.8" fill="#484848" >7/13/2021</text>
<text transform="translate(288.10,319.37) scale(0.855,1)" font-size="6.8" fill="#484848" >Dodge</text>
<g clip-path="url(#cName)"><text transform="translate(367.50,319.37) scale(0.855,1)" font-size="6.8" fill="#484848" >Grand Caravan</text></g>
<g clip-path="url(#cMod)"><text transform="translate(446.80,319.37) scale(0.835,1)" font-size="6.8" fill="#484848" >SXT 3.6L V6 6A</text></g>
<use href="#arR" transform="translate(577.50,316.87) scale(1.0)" fill="#dba46b"/>
<text transform="translate(633.30,319.37) scale(0.815,1)" font-size="6.8" fill="#484848" text-anchor="end" >17</text>
<use href="#arR" transform="translate(640.30,316.87) scale(1.0)" fill="#dba46b"/>
<text transform="translate(696.70,319.37) scale(0.815,1)" font-size="6.8" fill="#484848" text-anchor="end" >25</text>
<text transform="translate(738.90,319.37) scale(0.815,1)" font-size="6.8" fill="#484848" text-anchor="end" >6</text>
<text transform="translate(44.80,329.88) scale(0.815,1)" font-size="6.8" fill="#484848" text-anchor="end" >05908</text>
<text transform="translate(164.90,329.88) scale(0.815,1)" font-size="6.8" fill="#484848" text-anchor="end" >$29,420.00</text>
<use href="#star" transform="translate(172.10,327.49) scale(3.25)" fill="url(#g10)"/>
<text transform="translate(223.50,329.88) scale(0.815,1)" font-size="6.8" fill="#484848" text-anchor="end" >10.00%</text>
<text transform="translate(228.80,329.88) scale(0.885,1)" font-size="6.8" fill="#484848" >7/14/2021</text>
<text transform="translate(288.10,329.88) scale(0.855,1)" font-size="6.8" fill="#484848" >Mitsubishi</text>
<g clip-path="url(#cName)"><text transform="translate(367.50,329.88) scale(0.855,1)" font-size="6.8" fill="#484848" >Outlander</text></g>
<g clip-path="url(#cMod)"><text transform="translate(446.80,329.88) scale(0.835,1)" font-size="6.8" fill="#484848" >GT S-Awc 3.0L V6 6A</text></g>
<use href="#arR" transform="translate(577.50,327.39) scale(1.0)" fill="#dba46b"/>
<text transform="translate(633.30,329.88) scale(0.815,1)" font-size="6.8" fill="#484848" text-anchor="end" >19</text>
<use href="#arR" transform="translate(640.30,327.39) scale(1.0)" fill="#dba46b"/>
<text transform="translate(696.70,329.88) scale(0.815,1)" font-size="6.8" fill="#484848" text-anchor="end" >25</text>
<text transform="translate(738.90,329.88) scale(0.815,1)" font-size="6.8" fill="#484848" text-anchor="end" >6</text>
<text transform="translate(44.80,340.40) scale(0.815,1)" font-size="6.8" fill="#484848" text-anchor="end" >06704</text>
<text transform="translate(164.90,340.40) scale(0.815,1)" font-size="6.8" fill="#484848" text-anchor="end" >$32,655.00</text>
<text transform="translate(223.50,340.40) scale(0.815,1)" font-size="6.8" fill="#484848" text-anchor="end" >0.00%</text>
<text transform="translate(228.80,340.40) scale(0.885,1)" font-size="6.8" fill="#484848" >7/14/2021</text>
<text transform="translate(288.10,340.40) scale(0.855,1)" font-size="6.8" fill="#484848" >Honda</text>
<g clip-path="url(#cName)"><text transform="translate(367.50,340.40) scale(0.855,1)" font-size="6.8" fill="#484848" >Odyssey</text></g>
<g clip-path="url(#cMod)"><text transform="translate(446.80,340.40) scale(0.835,1)" font-size="6.8" fill="#484848" >EX 3.5L V6 5A</text></g>
<use href="#arR" transform="translate(577.50,337.90) scale(1.0)" fill="#dba46b"/>
<text transform="translate(633.30,340.40) scale(0.815,1)" font-size="6.8" fill="#484848" text-anchor="end" >18</text>
<use href="#arR" transform="translate(640.30,337.90) scale(1.0)" fill="#dba46b"/>
<text transform="translate(696.70,340.40) scale(0.815,1)" font-size="6.8" fill="#484848" text-anchor="end" >27</text>
<text transform="translate(738.90,340.40) scale(0.815,1)" font-size="6.8" fill="#484848" text-anchor="end" >6</text>
<text transform="translate(44.80,350.91) scale(0.815,1)" font-size="6.8" fill="#484848" text-anchor="end" >06965</text>
<text transform="translate(164.90,350.91) scale(0.815,1)" font-size="6.8" fill="#484848" text-anchor="end" >$34,030.00</text>
<use href="#star" transform="translate(172.10,348.52) scale(3.25)" fill="#dc9f63"/>
<text transform="translate(223.50,350.91) scale(0.815,1)" font-size="6.8" fill="#484848" text-anchor="end" >15.00%</text>
<text transform="translate(228.80,350.91) scale(0.885,1)" font-size="6.8" fill="#484848" >7/13/2021</text>
<text transform="translate(288.10,350.91) scale(0.855,1)" font-size="6.8" fill="#484848" >Nissan</text>
<g clip-path="url(#cName)"><text transform="translate(367.50,350.91) scale(0.855,1)" font-size="6.8" fill="#484848" >Maxima</text></g>
<g clip-path="url(#cMod)"><text transform="translate(446.80,350.91) scale(0.835,1)" font-size="6.8" fill="#484848" >SV 3.5L V6 VA</text></g>
<use href="#arR" transform="translate(577.50,348.42) scale(1.0)" fill="#dba46b"/>
<text transform="translate(633.30,350.91) scale(0.815,1)" font-size="6.8" fill="#484848" text-anchor="end" >19</text>
<use href="#arR" transform="translate(640.30,348.42) scale(1.0)" fill="#dba46b"/>
<text transform="translate(696.70,350.91) scale(0.815,1)" font-size="6.8" fill="#484848" text-anchor="end" >26</text>
<text transform="translate(738.90,350.91) scale(0.815,1)" font-size="6.8" fill="#484848" text-anchor="end" >6</text>
<text transform="translate(44.80,361.43) scale(0.815,1)" font-size="6.8" fill="#484848" text-anchor="end" >07242</text>
<text transform="translate(164.90,361.43) scale(0.815,1)" font-size="6.8" fill="#484848" text-anchor="end" >$45,190.00</text>
<use href="#star" transform="translate(172.10,359.03) scale(3.25)" fill="url(#g10)"/>
<text transform="translate(223.50,361.43) scale(0.815,1)" font-size="6.8" fill="#484848" text-anchor="end" >10.00%</text>
<text transform="translate(228.80,361.43) scale(0.885,1)" font-size="6.8" fill="#484848" >7/14/2021</text>
<text transform="translate(288.10,361.43) scale(0.855,1)" font-size="6.8" fill="#484848" >Dodge</text>
<g clip-path="url(#cName)"><text transform="translate(367.50,361.43) scale(0.855,1)" font-size="6.8" fill="#484848" >Challenger</text></g>
<g clip-path="url(#cMod)"><text transform="translate(446.80,361.43) scale(0.835,1)" font-size="6.8" fill="#484848" >Srt8 6.4L V8 6M</text></g>
<use href="#arR" transform="translate(577.50,358.93) rotate(90) scale(1.08)" fill="#c54d2d"/>
<text transform="translate(633.30,361.43) scale(0.815,1)" font-size="6.8" fill="#484848" text-anchor="end" >14</text>
<use href="#arR" transform="translate(640.30,358.93) scale(1.0)" fill="#dba46b"/>
<text transform="translate(696.70,361.43) scale(0.815,1)" font-size="6.8" fill="#484848" text-anchor="end" >23</text>
<text transform="translate(738.90,361.43) scale(0.815,1)" font-size="6.8" fill="#484848" text-anchor="end" >8</text>
<text transform="translate(44.80,371.94) scale(0.815,1)" font-size="6.8" fill="#484848" text-anchor="end" >07344</text>
<text transform="translate(164.90,371.94) scale(0.815,1)" font-size="6.8" fill="#484848" text-anchor="end" >$31,260.00</text>
<use href="#star" transform="translate(172.10,369.55) scale(3.25)" fill="#dc9f63"/>
<text transform="translate(223.50,371.94) scale(0.815,1)" font-size="6.8" fill="#484848" text-anchor="end" >15.00%</text>
<text transform="translate(228.80,371.94) scale(0.885,1)" font-size="6.8" fill="#484848" >7/13/2021</text>
<text transform="translate(288.10,371.94) scale(0.855,1)" font-size="6.8" fill="#484848" >Toyota</text>
<g clip-path="url(#cName)"><text transform="translate(367.50,371.94) scale(0.855,1)" font-size="6.8" fill="#484848" >Camry</text></g>
<g clip-path="url(#cMod)"><text transform="translate(446.80,371.94) scale(0.835,1)" font-size="6.8" fill="#484848" >XLE 3.5L V6 6AT</text></g>
<use href="#arR" transform="translate(577.50,369.45) scale(1.0)" fill="#dba46b"/>
<text transform="translate(633.30,371.94) scale(0.815,1)" font-size="6.8" fill="#484848" text-anchor="end" >21</text>
<use href="#arR" transform="translate(640.30,369.45) rotate(-90) scale(1.1)" fill="#0f7d0f"/>
<text transform="translate(696.70,371.94) scale(0.815,1)" font-size="6.8" fill="#484848" text-anchor="end" >31</text>
<text transform="translate(738.90,371.94) scale(0.815,1)" font-size="6.8" fill="#484848" text-anchor="end" >6</text>
<text transform="translate(44.80,382.46) scale(0.815,1)" font-size="6.8" fill="#484848" text-anchor="end" >07396</text>
<text transform="translate(164.90,382.46) scale(0.815,1)" font-size="6.8" fill="#484848" text-anchor="end" >$56,305.00</text>
<use href="#star" transform="translate(172.10,380.06) scale(3.25)" fill="url(#g5)"/>
<text transform="translate(223.50,382.46) scale(0.815,1)" font-size="6.8" fill="#484848" text-anchor="end" >5.00%</text>
<text transform="translate(228.80,382.46) scale(0.885,1)" font-size="6.8" fill="#484848" >7/13/2021</text>
<text transform="translate(288.10,382.46) scale(0.855,1)" font-size="6.8" fill="#484848" >Mercedes-Benz</text>
<g clip-path="url(#cName)"><text transform="translate(367.50,382.46) scale(0.855,1)" font-size="6.8" fill="#484848" >Slk350</text></g>
<g clip-path="url(#cMod)"><text transform="translate(446.80,382.46) scale(0.835,1)" font-size="6.8" fill="#484848" >3.5L V6 7A</text></g>
<use href="#arR" transform="translate(577.50,379.96) scale(1.0)" fill="#dba46b"/>
<text transform="translate(633.30,382.46) scale(0.815,1)" font-size="6.8" fill="#484848" text-anchor="end" >21</text>
<use href="#arR" transform="translate(640.30,379.96) scale(1.0)" fill="#dba46b"/>
<text transform="translate(696.70,382.46) scale(0.815,1)" font-size="6.8" fill="#484848" text-anchor="end" >29</text>
<text transform="translate(738.90,382.46) scale(0.815,1)" font-size="6.8" fill="#484848" text-anchor="end" >6</text>
<text transform="translate(44.80,392.97) scale(0.815,1)" font-size="6.8" fill="#484848" text-anchor="end" >07648</text>
<text transform="translate(164.90,392.97) scale(0.815,1)" font-size="6.8" fill="#484848" text-anchor="end" >$48,050.00</text>
<use href="#star" transform="translate(172.10,390.58) scale(3.25)" fill="url(#g10)"/>
<text transform="translate(223.50,392.97) scale(0.815,1)" font-size="6.8" fill="#484848" text-anchor="end" >10.00%</text>
<text transform="translate(228.80,392.97) scale(0.885,1)" font-size="6.8" fill="#484848" >7/13/2021</text>
<text transform="translate(288.10,392.97) scale(0.855,1)" font-size="6.8" fill="#484848" >Ford</text>
<g clip-path="url(#cName)"><text transform="translate(367.50,392.97) scale(0.855,1)" font-size="6.8" fill="#484848" >F-350 SD Supercab 4X4</text></g>
<g clip-path="url(#cMod)"><text transform="translate(446.80,392.97) scale(0.835,1)" font-size="6.8" fill="#484848" >6.2L V8 6A</text></g>
<text transform="translate(738.90,392.97) scale(0.815,1)" font-size="6.8" fill="#484848" text-anchor="end" >8</text>
<text transform="translate(44.80,403.49) scale(0.815,1)" font-size="6.8" fill="#484848" text-anchor="end" >07700</text>
<text transform="translate(164.90,403.49) scale(0.815,1)" font-size="6.8" fill="#484848" text-anchor="end" >$48,050.00</text>
<use href="#star" transform="translate(172.10,401.09) scale(3.25)" fill="#dc9f63"/>
<text transform="translate(223.50,403.49) scale(0.815,1)" font-size="6.8" fill="#484848" text-anchor="end" >15.00%</text>
<text transform="translate(228.80,403.49) scale(0.885,1)" font-size="6.8" fill="#484848" >7/14/2021</text>
<text transform="translate(288.10,403.49) scale(0.855,1)" font-size="6.8" fill="#484848" >Ford</text>
<g clip-path="url(#cName)"><text transform="translate(367.50,403.49) scale(0.855,1)" font-size="6.8" fill="#484848" >F-350 SD Supercab 4X4</text></g>
<g clip-path="url(#cMod)"><text transform="translate(446.80,403.49) scale(0.835,1)" font-size="6.8" fill="#484848" >6.2L V8 6A</text></g>
<text transform="translate(738.90,403.49) scale(0.815,1)" font-size="6.8" fill="#484848" text-anchor="end" >8</text>
<text transform="translate(44.80,414.00) scale(0.815,1)" font-size="6.8" fill="#484848" text-anchor="end" >07720</text>
<text transform="translate(164.90,414.00) scale(0.815,1)" font-size="6.8" fill="#484848" text-anchor="end" >$49,995.00</text>
<use href="#star" transform="translate(172.10,411.61) scale(3.25)" fill="#dc9f63"/>
<text transform="translate(223.50,414.00) scale(0.815,1)" font-size="6.8" fill="#484848" text-anchor="end" >15.00%</text>
<text transform="translate(228.80,414.00) scale(0.885,1)" font-size="6.8" fill="#484848" >7/13/2021</text>
<text transform="translate(288.10,414.00) scale(0.855,1)" font-size="6.8" fill="#484848" >Land Rover</text>
<g clip-path="url(#cName)"><text transform="translate(367.50,414.00) scale(0.855,1)" font-size="6.8" fill="#484848" >LR4</text></g>
<g clip-path="url(#cMod)"><text transform="translate(446.80,414.00) scale(0.835,1)" font-size="6.8" fill="#484848" >5.0L V8 6A</text></g>
<use href="#arR" transform="translate(577.50,411.51) rotate(90) scale(1.08)" fill="#c54d2d"/>
<text transform="translate(633.30,414.00) scale(0.815,1)" font-size="6.8" fill="#484848" text-anchor="end" >12</text>
<use href="#arR" transform="translate(640.30,411.51) rotate(90) scale(1.08)" fill="#c54d2d"/>
<text transform="translate(696.70,414.00) scale(0.815,1)" font-size="6.8" fill="#484848" text-anchor="end" >17</text>
<text transform="translate(738.90,414.00) scale(0.815,1)" font-size="6.8" fill="#484848" text-anchor="end" >8</text>
<text transform="translate(44.80,424.52) scale(0.815,1)" font-size="6.8" fill="#484848" text-anchor="end" >07769</text>
<text transform="translate(164.90,424.52) scale(0.815,1)" font-size="6.8" fill="#484848" text-anchor="end" >$56,305.00</text>
<use href="#star" transform="translate(172.10,422.12) scale(3.25)" fill="#dc9f63"/>
<text transform="translate(223.50,424.52) scale(0.815,1)" font-size="6.8" fill="#484848" text-anchor="end" >15.00%</text>
<text transform="translate(228.80,424.52) scale(0.885,1)" font-size="6.8" fill="#484848" >7/13/2021</text>
<text transform="translate(288.10,424.52) scale(0.855,1)" font-size="6.8" fill="#484848" >Mercedes-Benz</text>
<g clip-path="url(#cName)"><text transform="translate(367.50,424.52) scale(0.855,1)" font-size="6.8" fill="#484848" >Slk350</text></g>
<g clip-path="url(#cMod)"><text transform="translate(446.80,424.52) scale(0.835,1)" font-size="6.8" fill="#484848" >3.5L V6 7A</text></g>
<use href="#arR" transform="translate(577.50,422.02) scale(1.0)" fill="#dba46b"/>
<text transform="translate(633.30,424.52) scale(0.815,1)" font-size="6.8" fill="#484848" text-anchor="end" >21</text>
<use href="#arR" transform="translate(640.30,422.02) scale(1.0)" fill="#dba46b"/>
<text transform="translate(696.70,424.52) scale(0.815,1)" font-size="6.8" fill="#484848" text-anchor="end" >29</text>
<text transform="translate(738.90,424.52) scale(0.815,1)" font-size="6.8" fill="#484848" text-anchor="end" >6</text>
<text transform="translate(44.80,435.03) scale(0.815,1)" font-size="6.8" fill="#484848" text-anchor="end" >07791</text>
<text transform="translate(164.90,435.03) scale(0.815,1)" font-size="6.8" fill="#484848" text-anchor="end" >$43,450.00</text>
<use href="#star" transform="translate(172.10,432.64) scale(3.25)" fill="url(#g10)"/>
<text transform="translate(223.50,435.03) scale(0.815,1)" font-size="6.8" fill="#484848" text-anchor="end" >10.00%</text>
<text transform="translate(228.80,435.03) scale(0.885,1)" font-size="6.8" fill="#484848" >7/14/2021</text>
<text transform="translate(288.10,435.03) scale(0.855,1)" font-size="6.8" fill="#484848" >Toyota</text>
<g clip-path="url(#cName)"><text transform="translate(367.50,435.03) scale(0.855,1)" font-size="6.8" fill="#484848" >Sequoia</text></g>
<g clip-path="url(#cMod)"><text transform="translate(446.80,435.03) scale(0.835,1)" font-size="6.8" fill="#484848" >2WD 5dr. SR5 5.7L V8</text></g>
<use href="#arR" transform="translate(577.50,432.54) rotate(90) scale(1.08)" fill="#c54d2d"/>
<text transform="translate(633.30,435.03) scale(0.815,1)" font-size="6.8" fill="#484848" text-anchor="end" >13</text>
<use href="#arR" transform="translate(640.30,432.54) rotate(90) scale(1.08)" fill="#c54d2d"/>
<text transform="translate(696.70,435.03) scale(0.815,1)" font-size="6.8" fill="#484848" text-anchor="end" >18</text>
<text transform="translate(738.90,435.03) scale(0.815,1)" font-size="6.8" fill="#484848" text-anchor="end" >8</text>
<text transform="translate(44.80,445.55) scale(0.815,1)" font-size="6.8" fill="#484848" text-anchor="end" >07933</text>
<text transform="translate(164.90,445.55) scale(0.815,1)" font-size="6.8" fill="#484848" text-anchor="end" >$56,305.00</text>
<use href="#star" transform="translate(172.10,443.15) scale(3.25)" fill="#dc9f63"/>
<text transform="translate(223.50,445.55) scale(0.815,1)" font-size="6.8" fill="#484848" text-anchor="end" >15.00%</text>
<text transform="translate(228.80,445.55) scale(0.885,1)" font-size="6.8" fill="#484848" >7/13/2021</text>
<text transform="translate(288.10,445.55) scale(0.855,1)" font-size="6.8" fill="#484848" >Mercedes-Benz</text>
<g clip-path="url(#cName)"><text transform="translate(367.50,445.55) scale(0.855,1)" font-size="6.8" fill="#484848" >Slk350</text></g>
<g clip-path="url(#cMod)"><text transform="translate(446.80,445.55) scale(0.835,1)" font-size="6.8" fill="#484848" >3.5L V6 7A</text></g>
<use href="#arR" transform="translate(577.50,443.05) scale(1.0)" fill="#dba46b"/>
<text transform="translate(633.30,445.55) scale(0.815,1)" font-size="6.8" fill="#484848" text-anchor="end" >21</text>
<use href="#arR" transform="translate(640.30,443.05) scale(1.0)" fill="#dba46b"/>
<text transform="translate(696.70,445.55) scale(0.815,1)" font-size="6.8" fill="#484848" text-anchor="end" >29</text>
<text transform="translate(738.90,445.55) scale(0.815,1)" font-size="6.8" fill="#484848" text-anchor="end" >6</text>
<text transform="translate(44.80,456.06) scale(0.815,1)" font-size="6.8" fill="#484848" text-anchor="end" >08017</text>
<text transform="translate(164.90,456.06) scale(0.815,1)" font-size="6.8" fill="#484848" text-anchor="end" >$29,420.00</text>
<text transform="translate(223.50,456.06) scale(0.815,1)" font-size="6.8" fill="#484848" text-anchor="end" >0.00%</text>
<text transform="translate(228.80,456.06) scale(0.885,1)" font-size="6.8" fill="#484848" >7/14/2021</text>
<text transform="translate(288.10,456.06) scale(0.855,1)" font-size="6.8" fill="#484848" >Mitsubishi</text>
<g clip-path="url(#cName)"><text transform="translate(367.50,456.06) scale(0.855,1)" font-size="6.8" fill="#484848" >Outlander</text></g>
<g clip-path="url(#cMod)"><text transform="translate(446.80,456.06) scale(0.835,1)" font-size="6.8" fill="#484848" >GT S-Awc 3.0L V6 6A</text></g>
<use href="#arR" transform="translate(577.50,453.57) scale(1.0)" fill="#dba46b"/>
<text transform="translate(633.30,456.06) scale(0.815,1)" font-size="6.8" fill="#484848" text-anchor="end" >19</text>
<use href="#arR" transform="translate(640.30,453.57) scale(1.0)" fill="#dba46b"/>
<text transform="translate(696.70,456.06) scale(0.815,1)" font-size="6.8" fill="#484848" text-anchor="end" >25</text>
<text transform="translate(738.90,456.06) scale(0.815,1)" font-size="6.8" fill="#484848" text-anchor="end" >6</text>
<rect x="741.80" y="91.10" width="8.20" height="367.63" fill="#e6e6e6" />
<rect x="748.70" y="91.10" width="1.30" height="367.63" fill="#f4f4f4" />
<rect x="741.80" y="416.00" width="6.90" height="35.50" fill="#d8d8d8" />
<rect x="742.00" y="91.6" width="6.6" height="7.8" fill="#fff" stroke="#cfcfcf" stroke-width="0.5"/>
<rect x="742.00" y="99.6" width="6.6" height="316.3" fill="#fff" stroke="#cfcfcf" stroke-width="0.5"/>
<rect x="742.00" y="451.5" width="6.6" height="7" fill="#fff" stroke="#cfcfcf" stroke-width="0.5"/>
<path d="M743.80,96.4 h3.2 l-1.6,-2z" fill="#222"/>
<path d="M743.80,454.2 h3.2 l-1.6,2z" fill="#222"/>
<rect x="0.00" y="459.03" width="750.00" height="17.27" fill="#f0f0f0" />
<rect x="0.00" y="475.10" width="750.00" height="0.90" fill="#cdcdcd" />
<rect x="5.7" y="465" width="5.7" height="5.7" fill="#fff" stroke="#8c8c8c" stroke-width="0.6"/>
<path d="M6.9,467.8 l1.3,1.4 2.3,-2.8" stroke="#222" stroke-width="0.8" fill="none"/>
<path d="M18.8,461.9 q-1.6,0 -1.6,1.6 V471.7 q0,1.6 1.6,1.6 M152.9,461.9 q1.6,0 1.6,1.6 V471.7 q0,1.6 -1.6,1.6" fill="none" stroke="#b0b0b0" stroke-width="0.7"/>
<rect x="18.40" y="463.20" width="32.90" height="8.80" fill="#f8ccaa" />
<text transform="translate(20.80,469.60) scale(0.855,1)" font-size="6.2" fill="#333" >Model Price</text>
<text transform="translate(55.00,469.60) scale(0.855,1)" font-size="6.2" fill="#484848" >Between</text>
<rect x="78.00" y="463.20" width="30.20" height="8.80" fill="#b9e1b7" />
<text transform="translate(93.10,469.60) scale(0.83,1)" font-size="6.2" fill="#333" text-anchor="middle" >$25,000.00</text>
<text transform="translate(111.00,469.60) scale(0.855,1)" font-size="6.2" fill="#484848" >and</text>
<rect x="122.90" y="463.20" width="29.90" height="8.80" fill="#b9e1b7" />
<text transform="translate(137.85,469.60) scale(0.83,1)" font-size="6.2" fill="#333" text-anchor="middle" >$80,000.00</text>
<text transform="translate(160.00,469.60) scale(0.855,1)" font-size="6.2" fill="#484848" >And</text>
<path d="M176.4,461.9 q-1.6,0 -1.6,1.6 V471.7 q0,1.6 1.6,1.6 M261.9,461.9 q1.6,0 1.6,1.6 V471.7 q0,1.6 -1.6,1.6" fill="none" stroke="#b0b0b0" stroke-width="0.7"/>
<rect x="176.60" y="463.20" width="28.50" height="8.80" fill="#f8ccaa" />
<text transform="translate(178.80,469.60) scale(0.855,1)" font-size="6.2" fill="#333" >Sales Date</text>
<rect x="206.30" y="463.20" width="31.30" height="8.80" fill="#b3d0ea" />
<text transform="translate(221.95,469.60) scale(0.88,1)" font-size="6.2" fill="#333" text-anchor="middle" >Is yesterday</text>
<rect x="240.00" y="463.20" width="21.80" height="8.80" fill="#b3d0ea" />
<text transform="translate(250.90,469.60) scale(0.88,1)" font-size="6.2" fill="#333" text-anchor="middle" >Is today</text>
<path d="M708.2,465.4 h6.4 M708.2,467.7 h4.4 M708.2,470 h6.4" stroke="#222" stroke-width="0.9"/>
<path d="M724.3,470.4 l0.5,-1.9 3.2,-3.2 1.4,1.4 -3.2,3.2z" fill="#333"/>
<path d="M739.3,465.3 l4.9,4.9 M744.2,465.3 l-4.9,4.9" stroke="#222" stroke-width="1.05" fill="none"/>
<rect x="250.4" y="150.5" width="249.70000000000002" height="174.10000000000002" fill="#000" opacity="0.5" filter="url(#sh)"/>
<rect x="251.00" y="150.70" width="248.30" height="172.90" fill="#fff" />
<rect x="251.00" y="150.70" width="248.30" height="16.70" fill="#f6f6f6" />
<rect x="251.00" y="298.80" width="248.30" height="24.80" fill="#f6f6f6" />
<rect x="251.0" y="150.7" width="248.3" height="172.90000000000003" fill="none" stroke="#c8c8c8" stroke-width="0.5"/>
<text transform="translate(253.00,161.50) scale(0.855,1)" font-size="6.8" fill="#484848" >Filter Editor</text>
<path d="M485.8,156.9 l4.5,4.5 M490.3,156.9 l-4.5,4.5" stroke="#222" stroke-width="0.85" fill="none"/>
<rect x="256.00" y="169.10" width="14.90" height="10.60" fill="#7d9fc9" />
<rect x="256.00" y="178.90" width="14.90" height="0.80" fill="#4f7db5" />
<text transform="translate(263.45,176.70) scale(0.855,1)" font-size="6.8" fill="#fff" text-anchor="middle" >And</text>
<circle cx="277.3" cy="174.4" r="3.3" fill="#7b7b7b"/><path d="M275.40000000000003,174.4 h3.8 M277.3,172.5 v3.8" stroke="#fff" stroke-width="1"/>
<path d="M283.00,173.50 h3.8 l-1.9,2.3z" fill="#444"/>
<rect x="268.00" y="182.20" width="35.30" height="10.40" fill="#f8ccaa" />
<text transform="translate(270.10,189.70) scale(0.855,1)" font-size="6.8" fill="#333" >Model Price</text>
<rect x="305.60" y="182.20" width="72.80" height="10.40" fill="#bad5ea" />
<text transform="translate(307.90,189.70) scale(0.872,1)" font-size="6.8" fill="#333" >Is greater than or equal to</text>
<rect x="380.80" y="182.20" width="33.10" height="10.40" fill="#b9e1b7" />
<text transform="translate(383.30,189.70) scale(0.815,1)" font-size="6.8" fill="#333" >$25,000.00</text>
<rect x="268.00" y="195.10" width="35.30" height="10.40" fill="#f8ccaa" />
<text transform="translate(270.10,202.60) scale(0.855,1)" font-size="6.8" fill="#333" >Model Price</text>
<rect x="305.60" y="195.10" width="63.50" height="10.40" fill="#bad5ea" />
<text transform="translate(307.90,202.60) scale(0.872,1)" font-size="6.8" fill="#333" >Is less than or equal to</text>
<rect x="371.30" y="195.10" width="33.10" height="10.40" fill="#b9e1b7" />
<text transform="translate(373.80,202.60) scale(0.815,1)" font-size="6.8" fill="#333" >$80,000.00</text>
<rect x="268.00" y="208.10" width="10.30" height="10.70" fill="#3167a7" />
<rect x="268.00" y="218.00" width="10.30" height="0.80" fill="#244f86" />
<text transform="translate(273.15,216.00) scale(0.855,1)" font-size="6.8" fill="#fff" text-anchor="middle" >Or</text>
<circle cx="285" cy="213.5" r="3.3" fill="#7b7b7b"/><path d="M283.1,213.5 h3.8 M285,211.6 v3.8" stroke="#fff" stroke-width="1"/>
<path d="M290.70,212.60 h3.8 l-1.9,2.3z" fill="#444"/>
<rect x="280.10" y="221.30" width="31.10" height="10.40" fill="#f8ccaa" />
<text transform="translate(282.20,228.80) scale(0.855,1)" font-size="6.8" fill="#333" >Sales Date</text>
<rect x="313.40" y="221.30" width="34.90" height="10.40" fill="#bad5ea" />
<text transform="translate(315.70,228.80) scale(0.872,1)" font-size="6.8" fill="#333" >Is Yesterday</text>
<rect x="280.10" y="234.30" width="31.10" height="10.40" fill="#f8ccaa" />
<text transform="translate(282.20,241.80) scale(0.855,1)" font-size="6.8" fill="#333" >Sales Date</text>
<rect x="313.40" y="234.30" width="25.50" height="10.40" fill="#bad5ea" />
<text transform="translate(315.70,241.80) scale(0.872,1)" font-size="6.8" fill="#333" >Is Today</text>
<rect x="381" y="304.6" width="34.5" height="11.7" fill="#fdfdfd" stroke="#bdbdbd" stroke-width="0.6"/>
<text transform="translate(398.25,312.70) scale(0.855,1)" font-size="6.8" fill="#484848" text-anchor="middle" >OK</text>
<rect x="418" y="304.6" width="34.19999999999999" height="11.7" fill="#fdfdfd" stroke="#bdbdbd" stroke-width="0.6"/>
<text transform="translate(435.10,312.70) scale(0.855,1)" font-size="6.8" fill="#484848" text-anchor="middle" >Cancel</text>
<rect x="455" y="304.6" width="34.30000000000001" height="11.7" fill="#fdfdfd" stroke="#3f8ad8" stroke-width="0.9"/>
<text transform="translate(472.15,312.70) scale(0.855,1)" font-size="6.8" fill="#484848" text-anchor="middle" >Apply</text>
<rect x="0.00" y="16.50" width="0.80" height="476.00" fill="#c6cbd2" />
<rect x="749.40" y="16.50" width="0.60" height="476.00" fill="#c4c4c4" />
</svg></body></html>
